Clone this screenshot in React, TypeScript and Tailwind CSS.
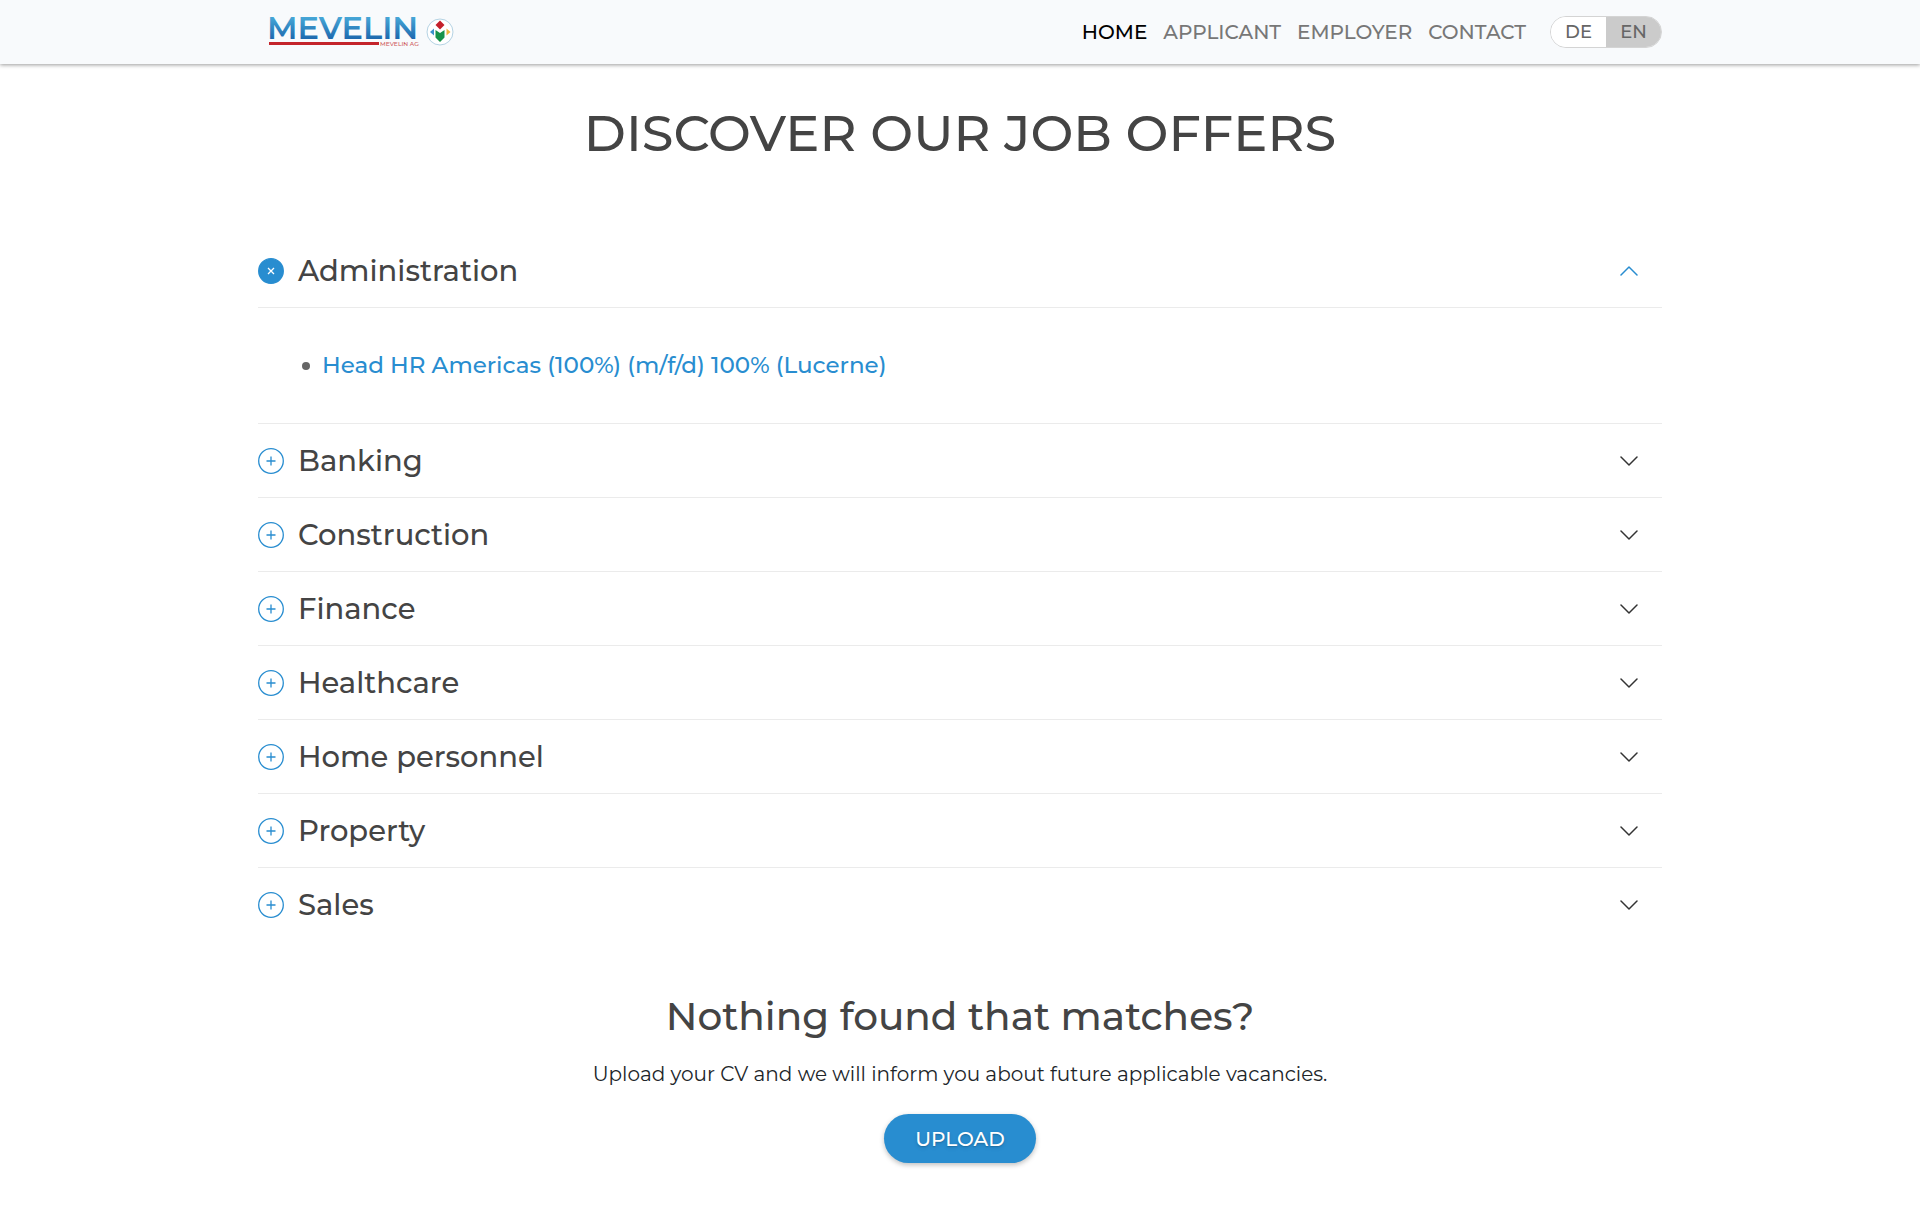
import { useState } from 'react'

const navItems = ['Home', 'Applicant', 'Employer', 'Contact']

const categories = [
  { name: 'Administration', jobs: ['Head HR Americas (100%) (m/f/d) 100% (Lucerne)'] },
  { name: 'Banking', jobs: [] },
  { name: 'Construction', jobs: [] },
  { name: 'Finance', jobs: [] },
  { name: 'Healthcare', jobs: [] },
  { name: 'Home personnel', jobs: [] },
  { name: 'Property', jobs: [] },
  { name: 'Sales', jobs: [] },
]

function Logo() {
  return (
    <svg width="190" height="48" viewBox="0 0 190 48" role="img" aria-label="Mevelin AG">
      <defs>
        <linearGradient id="logo-blue" x1="0" y1="0" x2="0" y2="1">
          <stop offset="0.25" stopColor="#45a5d6" />
          <stop offset="0.8" stopColor="#1d68ae" />
        </linearGradient>
      </defs>
      <text x="-1" y="31" fontSize="32" fontWeight="600" fill="url(#logo-blue)">
        MEVELIN
      </text>
      <rect x="1" y="34" width="110" height="3" fill="#c4242b" />
      <text x="112" y="38" fontSize="6" fontWeight="500" fill="#cf5a60">
        MEVELIN AG
      </text>
      <circle cx="172" cy="24" r="13" fill="#fff" stroke="#b5d3e4" />
      <path d="M172 12.500l4.500 4.500-4.500 4.500-4.500-4.500z" fill="#c4202b" />
      <path d="M167.500 22l4.500 3 4.500-3v7.500l-4.500 4.500-4.500-4.500z" fill="#17934a" />
      <path d="M166 20.500v7l-4-3.500z" fill="#3c92cb" />
      <path d="M178.500 20.500v7l4-3.500z" fill="#efb73e" />
    </svg>
  )
}

function Header() {
  return (
    <header className="h-16 bg-[#f8fafc] shadow-[0_1px_4px_rgba(0,0,0,0.4)]">
      <div className="max-w-[1404px] h-full mx-auto pl-2.5 flex items-center justify-between">
        <a href="#home">
          <Logo />
        </a>
        <nav className="flex items-center gap-4 text-xl font-medium uppercase">
          {navItems.map((item, i) => (
            <a key={item} href={`#${item.toLowerCase()}`} className={i === 0 ? 'text-black' : 'text-[#777]'}>
              {item}
            </a>
          ))}
          <div className="ml-2 h-8 w-28 flex rounded-full border border-[#d4d4d4] overflow-hidden text-lg text-[#666]">
            <button className="flex-1 bg-white font-medium">DE</button>
            <button className="flex-1 bg-[#cbcbcb] font-medium">EN</button>
          </div>
        </nav>
      </div>
    </header>
  )
}

function ToggleIcon({ open }: { open: boolean }) {
  return (
    <svg width="26" height="26" viewBox="0 0 26 26" fill="none" strokeWidth="1.300">
      <circle cx="13" cy="13" r="12.300" stroke="#288dd0" fill={open ? '#288dd0' : 'none'} />
      {open ? (
        <path d="M10 10l6 6M16 10l-6 6" stroke="#fff" />
      ) : (
        <path d="M13 8.500v9M8.500 13h9" stroke="#288dd0" />
      )}
    </svg>
  )
}

function Chevron({ open }: { open: boolean }) {
  return (
    <svg width="18" height="18" viewBox="0 0 18 18" fill="none" strokeWidth="1.500" strokeLinecap="round" strokeLinejoin="round">
      {open ? <path d="M1 13l8-8 8 8" stroke="#288dd0" /> : <path d="M1 5l8 8 8-8" stroke="#333" />}
    </svg>
  )
}

function JobAccordion() {
  const [active, setActive] = useState('Administration')

  return (
    <div className="divide-y divide-[#ebebeb]">
      {categories.map(({ name, jobs }) => {
        const open = active === name
        return (
          <section key={name}>
            <h3>
              <button
                aria-expanded={open}
                onClick={() => setActive(open ? '' : name)}
                className="w-full h-[73px] pr-6 flex items-center gap-3.5 text-left text-[29px] font-medium text-[#444]"
              >
                <ToggleIcon open={open} />
                <span className="flex-1">{name}</span>
                <Chevron open={open} />
              </button>
            </h3>
            {open && (
              <ul className="min-h-[116px] pl-11 border-t border-[#ebebeb] flex flex-col justify-center">
                {jobs.map((job) => (
                  <li key={job} className="flex items-center gap-3 text-[23px] font-medium">
                    <span className="w-2 h-2 rounded-full bg-[#666]"></span>
                    <a href="#job" className="text-[#288dd0]">{job}</a>
                  </li>
                ))}
              </ul>
            )}
          </section>
        )
      })}
    </div>
  )
}

function UploadCv() {
  return (
    <section className="pt-[45px] pb-11 flex flex-col items-center text-center">
      <h2 className="text-[39px] leading-[60px] font-medium text-[#444]">Nothing found that matches?</h2>
      <p className="mt-3 text-xl leading-8 text-[#212529]">
        Upload your CV and we will inform you about future applicable vacancies.
      </p>
      <button className="mt-6 h-[49px] w-[152px] rounded-full bg-[#288dd0] text-xl font-medium text-white shadow-[0_2px_5px_rgba(0,0,0,0.25)] text-shadow-md">
        UPLOAD
      </button>
    </section>
  )
}

export default function App() {
  return (
    <div className="min-h-screen bg-white font-['Montserrat','Inter',sans-serif]">
      <Header />
      <main className="max-w-[1404px] mx-auto">
        <h1 className="pt-9 pb-[68px] text-center text-[51px] leading-[66px] font-medium text-[#444]">
          DISCOVER OUR JOB OFFERS
        </h1>
        <JobAccordion />
        <UploadCv />
      </main>
    </div>
  )
}
